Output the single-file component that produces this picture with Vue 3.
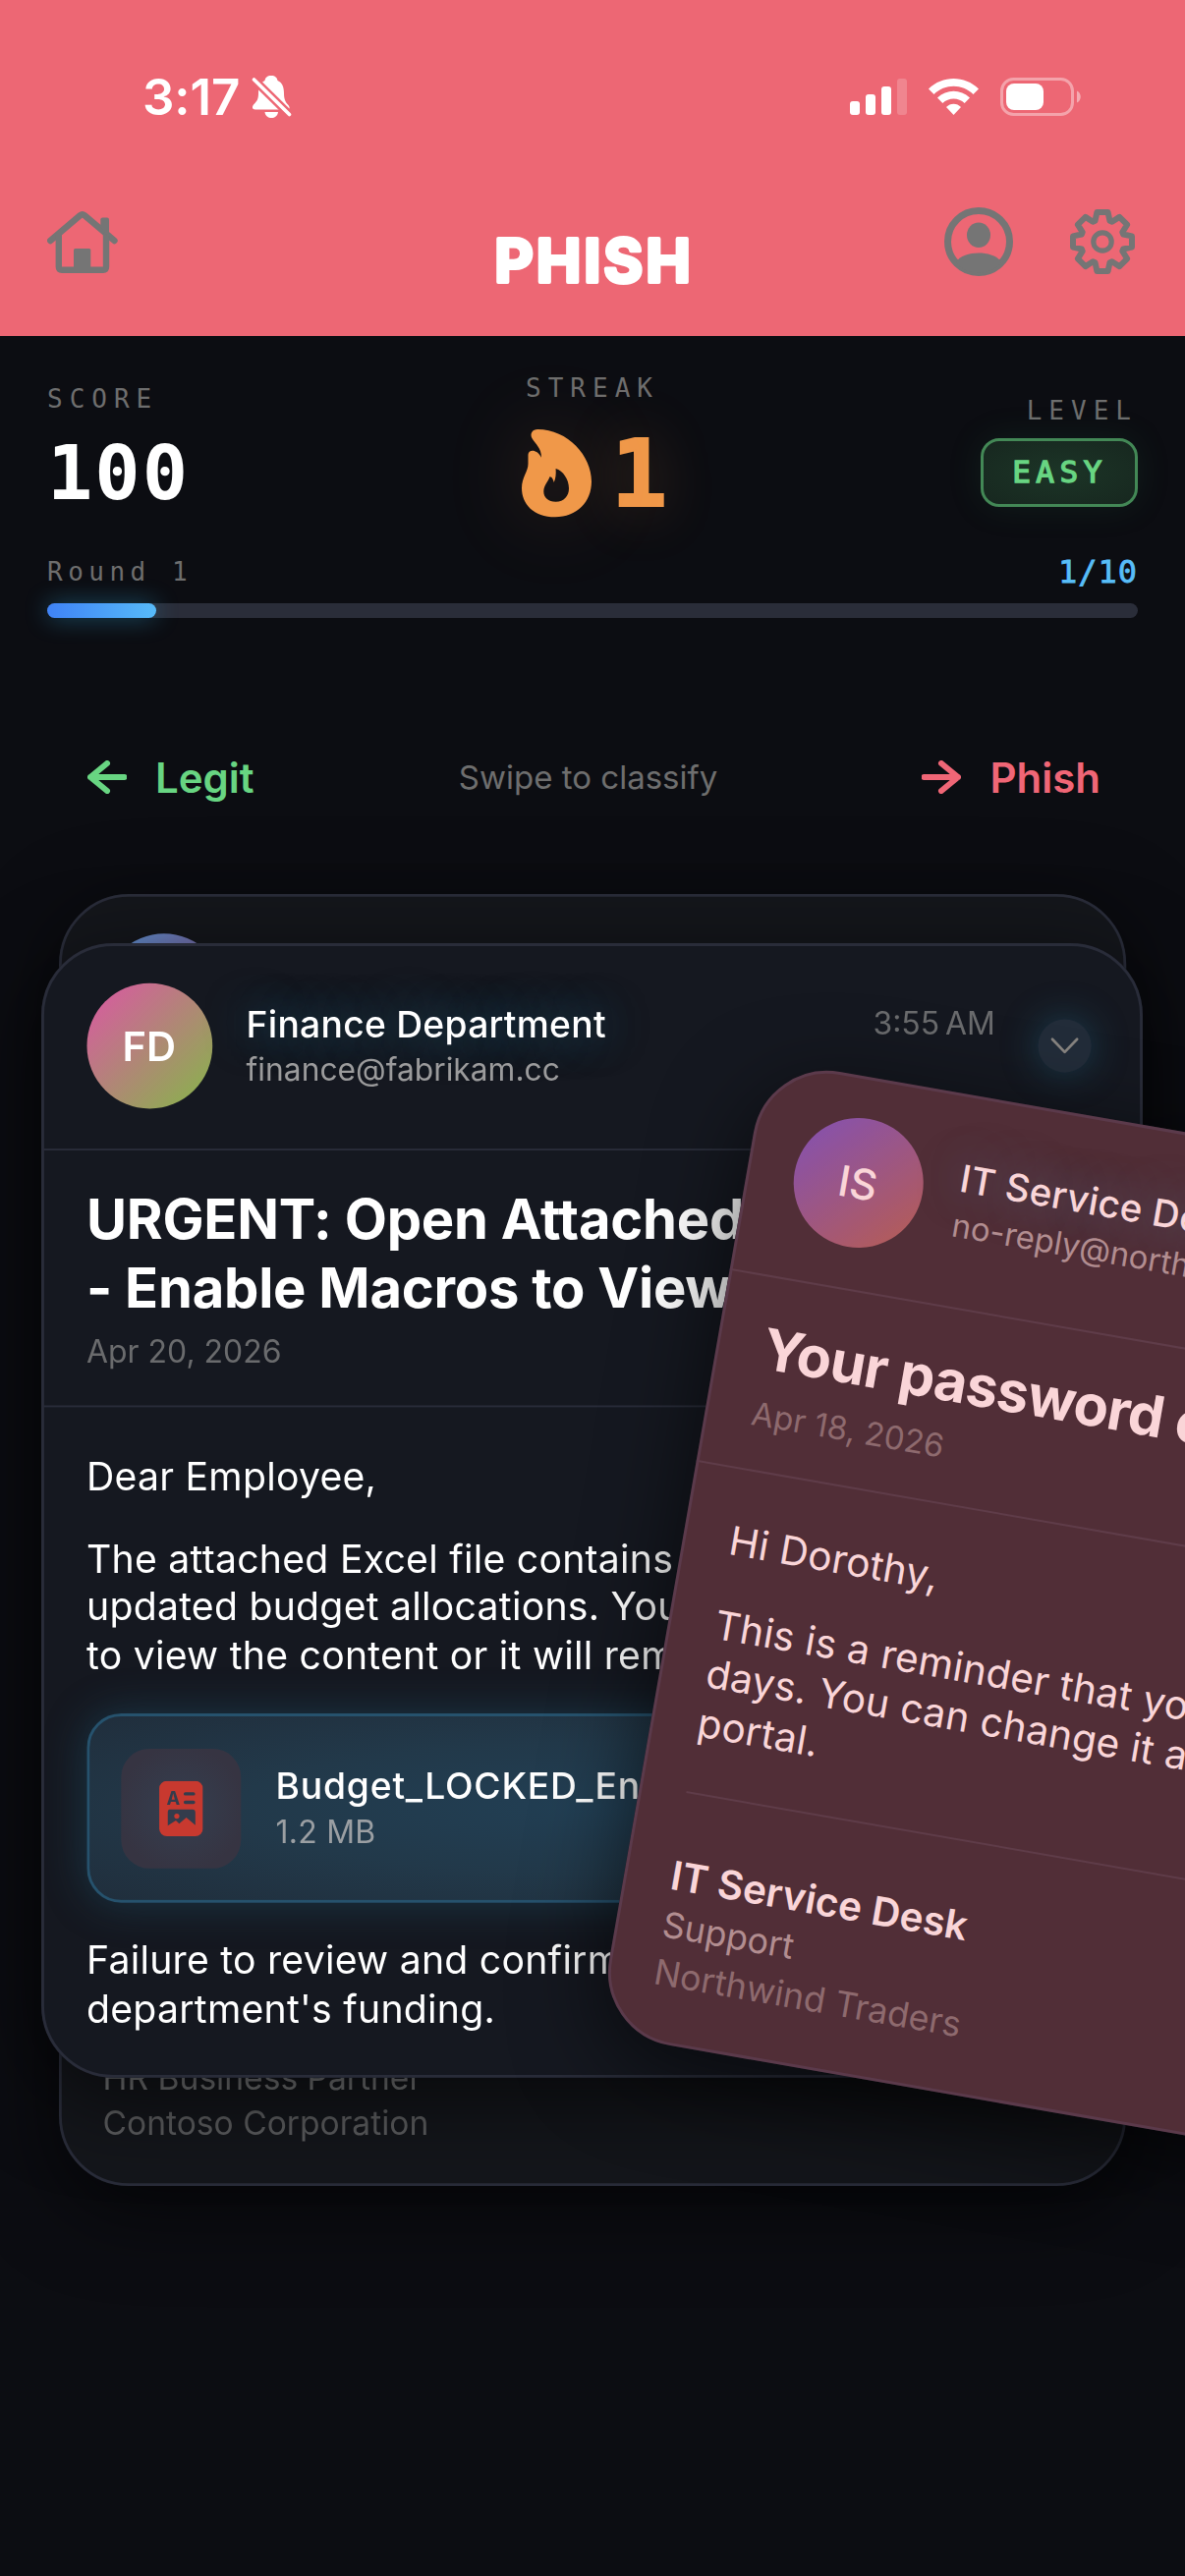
<script setup>
import { computed, ref } from 'vue';

const round = ref(1);
const totalRounds = 10;
const progress = computed(() => `${(round.value / totalRounds) * 100}%`);

const gearPath = computed(() =>
{
    const points = [];
    for (let i = 0; i < 8; i++)
    {
        const base = i * 45;
        [[-19.5, 22.5], [-10.5, 30.5], [10.5, 30.5], [19.5, 22.5]].forEach(([deg, r]) =>
        {
            const a = ((base + deg) * Math.PI) / 180;
            points.push(`${(Math.sin(a) * r).toFixed(2)} ${(-Math.cos(a) * r).toFixed(2)}`);
        });
    }
    return `M${points.join('L')}Z`;
});

// de atrás hacia delante
const cards = [
    {
        id: 'back',
        initials: '',
        subject: [],
        paragraphs: [],
        signature: { name: '', role: 'HR Business Partner', company: 'Contoso Corporation' }
    },
    {
        id: 'front',
        initials: 'FD',
        name: 'Finance Department',
        email: 'finance@fabrikam.cc',
        time: '3:55\u2009AM',
        subject: ['URGENT: Open Attached', '- Enable Macros to View'],
        date: 'Apr 20, 2026',
        paragraphs: [
            ['Dear Employee,'],
            ['The attached Excel file contains', 'updated budget allocations. You', 'to view the content or it will remain']
        ],
        file: { name: 'Budget_LOCKED_Enable.xlsm', size: '1.2 MB' },
        closing: ['Failure to review and confirm', "department's funding."]
    },
    {
        id: 'swiped',
        initials: 'IS',
        name: 'IT Service Desk',
        email: 'no-reply@northwindtraders.com',
        subject: ['Your password expires soon'],
        date: 'Apr 18, 2026',
        paragraphs: [
            ['Hi Dorothy,'],
            ['This is a reminder that your password', 'days. You can change it anytime', 'portal.']
        ],
        signature: { name: 'IT Service Desk', role: 'Support', company: 'Northwind Traders' }
    }
];
</script>

<template>
    <main class="screen">
        <header class="top">
            <div class="status">
                <div class="status-left">
                    <span class="clock">3:17</span>
                    <svg class="bell" viewBox="256 76 42 45">
                        <path d="M276 77c4 0 6 2 6.500 5c5 2 6.500 7 6.500 13c0 6 1.500 9 4 11.500c2 2 2.500 5-.5 5H260c-4 0-3.500-3.500-1.500-5.500c3-3 4.500-5 4.500-11c0-6 2-11 6.500-13c.5-3 2.500-5 6.500-5z" fill="#fff" />
                        <path d="M269.500 114h13.500c-.5 4-3.500 6-6.750 6s-6.250-2-6.750-6z" fill="#fff" />
                        <path d="M258.500 81L294.500 116.500" stroke="#ed6774" stroke-width="8.500" />
                        <path d="M258.500 81L294.500 116.500" stroke="#fff" stroke-width="3.600" stroke-linecap="round" />
                    </svg>
                </div>
                <div class="status-right">
                    <svg class="signal" viewBox="0 0 58 37" fill="#fff">
                        <rect x="0" y="23" width="10" height="14" rx="3" />
                        <rect x="16" y="16" width="10" height="21" rx="3" />
                        <rect x="32" y="8" width="10" height="29" rx="3" />
                        <rect x="48" y="0" width="10" height="37" rx="3" opacity=".2" />
                    </svg>
                    <svg class="wifi" viewBox="0 0 51 37" fill="#fff">
                        <path d="M0 10.500C14-3.500 37-3.500 51 10.500L45.500 16C34.500 5 16.500 5 5.500 16Z" />
                        <path d="M9 19.500C18.500 10.500 32.500 10.500 42 19.500L36.700 25C30.500 19 20.500 19 14.300 25Z" />
                        <path d="M18 29C22 24.500 29 24.500 33 29L25.500 37Z" />
                    </svg>
                    <svg class="battery" viewBox="0 0 83 39">
                        <rect x="1.500" y="1.500" width="72" height="36" rx="12" fill="none" stroke="#fff" stroke-opacity=".4" stroke-width="3" />
                        <rect x="6" y="6" width="38" height="27" rx="8" fill="#fff" />
                        <path d="M78 13.500c5 2 5 10 0 12z" fill="#fff" fill-opacity=".45" />
                    </svg>
                </div>
            </div>
            <nav class="nav">
                <svg class="home" viewBox="48 210 73 73" fill="none" stroke="#757575" stroke-width="6.400" stroke-linecap="round" stroke-linejoin="round">
                    <path d="M51.200 245L81.500 219.300Q83.800 217.500 86.100 219.300L116.500 245" />
                    <path d="M59.800 240V271.500Q59.800 274.700 63 274.700H105Q108 274.700 108 271.500V240" />
                    <path d="M102.300 231V223.500Q102.300 221.500 104.300 221.500H109Q111 221.500 111 223.500V242Z" fill="#757575" stroke="none" />
                    <path d="M75 275V254.500Q75 253 76.500 253H90.800Q92.300 253 92.300 254.500V275Z" fill="#757575" stroke="none" />
                </svg>
                <svg class="logo" viewBox="0 0 240 84">
                    <text x="122.500" y="62.500" text-anchor="middle">PHISH</text>
                </svg>
                <div class="nav-right">
                    <svg class="person" viewBox="0 0 70 70" fill="#757575">
                        <circle cx="35" cy="35" r="31.500" fill="none" stroke="#757575" stroke-width="7" />
                        <ellipse cx="35" cy="28.300" rx="12" ry="12.700" />
                        <path d="M12 55.500C20 43.500 50 43.500 58 55.500C50 70 20 70 12 55.500Z" />
                    </svg>
                    <svg class="gear" viewBox="-34 -34 68 68" fill="none" stroke="#757575" stroke-linejoin="round">
                        <path :d="gearPath" stroke-width="6" />
                        <circle r="9.200" stroke-width="5.200" />
                    </svg>
                </div>
            </nav>
        </header>

        <section class="stats">
            <div class="stat score">
                <span class="label">SCORE</span>
                <span class="score-value">100</span>
            </div>
            <div class="stat streak">
                <span class="label">STREAK</span>
                <div class="streak-value">
                    <svg class="flame" viewBox="0 0 74 90">
                        <path fill="#f09849" fill-rule="evenodd" d="M10.400 9C8 4 11 0 16.200 0C47 0 71 27 71 53C71 74 56 89.300 34 89.300C12 89.300 0 76 0 59.700C0 49 6.500 43 6.500 35V25.700C7 20.500 15 19.500 20 28.700C20 19 14 15 10.400 9ZM34.600 40C35 46 34.500 50 32.700 54C32 51 30.500 48 28.500 48.300C27 53 22.300 57 22.300 63.300C22.300 69.500 27 73.700 34.600 73.700C43 73.700 48 68 48 60C48 51 42 42 34.600 40Z" />
                    </svg>
                    <span class="streak-count">1</span>
                </div>
            </div>
            <div class="stat level">
                <span class="label">LEVEL</span>
                <span class="badge">EASY</span>
            </div>
        </section>

        <section class="round">
            <div class="round-row">
                <span class="label round-label">Round {{ round }}</span>
                <span class="round-count">{{ round }}/{{ totalRounds }}</span>
            </div>
            <div class="track">
                <div class="fill" :style="{ width: progress }"></div>
            </div>
        </section>

        <section class="hints">
            <div class="hint legit">
                <svg viewBox="0 0 40 34"><path d="M20 3L3 17L20 31M3 17H37.500" /></svg>
                <span>Legit</span>
            </div>
            <span class="hint-text">Swipe to classify</span>
            <div class="hint phish">
                <svg viewBox="0 0 40 34"><path d="M20 3L37 17L20 31M37 17H2.500" /></svg>
                <span>Phish</span>
            </div>
        </section>

        <section class="deck">
            <article v-for="card in cards" :key="card.id" class="card" :class="card.id">
                <div class="card-header">
                    <div class="avatar">{{ card.initials }}</div>
                    <div class="sender">
                        <span class="name">{{ card.name }}</span>
                        <span class="email">{{ card.email }}</span>
                    </div>
                    <span v-if="card.time" class="time">{{ card.time }}</span>
                    <span v-if="card.time" class="toggle">
                        <svg viewBox="0 0 30 18"><path d="M2 2L15 15.500L28 2" /></svg>
                    </span>
                </div>

                <div v-if="card.subject.length" class="card-subject">
                    <h2><span v-for="line in card.subject" :key="line">{{ line }}</span></h2>
                    <span class="date">{{ card.date }}</span>
                </div>

                <div class="card-body">
                    <p v-for="(lines, i) in card.paragraphs" :key="i">
                        <span v-for="line in lines" :key="line">{{ line }}</span>
                    </p>
                    <div v-if="card.file" class="file">
                        <div class="file-icon">
                            <svg viewBox="0 0 46 58">
                                <rect width="46" height="58" rx="8" fill="#c8392f" />
                                <text x="15" y="25" text-anchor="middle">A</text>
                                <path d="M27.500 13.500H36M27.500 22.500H36" stroke="#343c4c" stroke-width="3.600" stroke-linecap="round" />
                                <path d="M11 30H35Q38 30 38 33V46.500L28.500 38.500L21 45L17.500 41.500L9 47V33Q9 30 11 30Z" fill="#343c4c" />
                                <circle cx="18.500" cy="37" r="2.700" fill="#c8392f" />
                            </svg>
                        </div>
                        <div class="file-info">
                            <span class="file-name">{{ card.file.name }}</span>
                            <span class="file-size">{{ card.file.size }}</span>
                        </div>
                    </div>
                    <p v-if="card.closing">
                        <span v-for="line in card.closing" :key="line">{{ line }}</span>
                    </p>
                    <div v-if="card.signature" class="signature">
                        <span class="sig-name">{{ card.signature.name }}</span>
                        <span class="sig-role">{{ card.signature.role }}</span>
                        <span class="sig-company">{{ card.signature.company }}</span>
                    </div>
                </div>
            </article>
        </section>
    </main>
</template>

<style>
body {
    margin: 0;
    background: #0c0d12;
}
</style>

<style scoped>
* {
    box-sizing: border-box;
}

.screen {
    width: 1206px;
    height: 2622px;
    overflow: hidden;
    background: #0c0d12;
    color: #fff;
    font-family: Inter, "Liberation Sans", sans-serif;
}

svg {
    display: block;
    flex-shrink: 0;
}

/* Header */
.top {
    height: 342px;
    background: #ed6774;
}

.status {
    display: flex;
    justify-content: space-between;
    align-items: center;
    height: 196px;
    padding: 0 105px 0 145px;
}

.status-left,
.status-right {
    display: flex;
    align-items: center;
}

.status-left {
    gap: 12px;
}

.clock {
    font-size: 51px;
    font-weight: 600;
    letter-spacing: -0.1px;
}

.bell {
    width: 42px;
    height: 45px;
}

.signal {
    width: 58px;
    height: 37px;
    margin-right: 22px;
}

.wifi {
    width: 51px;
    height: 37px;
    margin-right: 22px;
}

.battery {
    width: 83px;
    height: 39px;
}

.nav {
    display: grid;
    grid-template-columns: 1fr auto 1fr;
    align-items: start;
    padding: 14px 50px 0 48px;
}

.home {
    width: 73px;
    height: 73px;
}

.logo {
    width: 240px;
    height: 84px;
    margin-top: 14px;
    overflow: visible;
}

.logo text {
    font-size: 61px;
    font-weight: 700;
    letter-spacing: 3px;
    fill: #fff;
    stroke: #fff;
    stroke-width: 4px;
    stroke-linejoin: round;
}

.nav-right {
    display: flex;
    justify-content: flex-end;
    align-items: center;
    gap: 57px;
    padding-top: 1px;
}

.person {
    width: 70px;
    height: 70px;
}

.gear {
    width: 68px;
    height: 68px;
}

/* Stats */
.stats {
    display: grid;
    grid-template-columns: 1fr auto 1fr;
    align-items: center;
    height: 158px;
    margin: 37px 48px 0;
    font-family: "DejaVu Sans Mono", monospace;
}

.stat {
    display: flex;
    flex-direction: column;
    align-items: flex-start;
}

.label {
    font-family: "DejaVu Sans Mono", monospace;
    font-size: 26px;
    line-height: 32px;
    letter-spacing: 7px;
    color: #6e6e6e;
}

.score-value {
    margin-top: 15px;
    font-size: 77px;
    font-weight: 700;
    line-height: 90px;
    letter-spacing: 2px;
}

.streak {
    align-items: center;
}

.streak-value {
    display: flex;
    align-items: center;
    gap: 17px;
    height: 110px;
    margin-top: 16px;
    margin-left: 4px;
    font-size: 95px;
    font-weight: 700;
    line-height: 110px;
    color: #f09849;
    text-shadow: 0 0 60px rgba(240, 152, 73, 0.3);
}

.streak-count {
    -webkit-text-stroke: 2px currentColor;
}

.flame {
    width: 74px;
    height: 90px;
    filter: drop-shadow(0 0 40px rgba(240, 152, 73, 0.16));
}

.level {
    align-items: flex-end;
    padding-top: 2px;
}

.badge {
    width: 160px;
    height: 70px;
    margin-top: 12px;
    border: 3px solid #438856;
    border-radius: 19px;
    background: radial-gradient(#1c3527, #17271f);
    box-shadow: 0 0 36px rgba(50, 150, 90, 0.12);
    font-size: 31px;
    line-height: 63px;
    letter-spacing: 5.500px;
    text-indent: 1px;
    text-align: center;
    color: #68d582;
    -webkit-text-stroke: 1.4px currentColor;
}

.round {
    margin: 25px 48px 0;
}

.round-row {
    display: flex;
    justify-content: space-between;
    height: 40px;
}

.round-label {
    line-height: 40px;
    letter-spacing: 5.5px;
}

.round-count {
    font-family: "DejaVu Sans Mono", monospace;
    font-size: 32px;
    line-height: 40px;
    letter-spacing: 1px;
    color: #58bdf8;
    -webkit-text-stroke: 0.8px currentColor;
}

.track {
    height: 15px;
    margin-top: 12px;
    border-radius: 8px;
    background: #2a2d39;
}

.fill {
    height: 100%;
    border-radius: 8px;
    background: linear-gradient(90deg, #3f83f6, #57bbf9);
    box-shadow: 0 0 24px rgba(56, 189, 248, 0.4);
}

/* Swipe hints */
.hints {
    display: flex;
    justify-content: space-between;
    align-items: center;
    height: 50px;
    margin: 137px 86px 0 89px;
}

.hint {
    display: flex;
    align-items: center;
    gap: 29px;
    font-size: 42px;
    font-weight: 600;
}

.hint svg {
    width: 40px;
    height: 34px;
    fill: none;
    stroke: currentColor;
    stroke-width: 6;
    stroke-linecap: round;
    stroke-linejoin: round;
}

.legit {
    color: #68d582;
}

.phish {
    color: #f06676;
}

.hint-text {
    font-size: 33px;
    color: #6e6e6e;
}

/* Cards */
.deck {
    position: relative;
    height: 1712px;
    margin-top: 94px;
}

.card {
    position: absolute;
    width: 1158px;
    border-radius: 76px;
    background: #151820;
    box-shadow: 0 24px 90px rgba(0, 0, 0, 0.6);
    transform-origin: 0 0;
    white-space: nowrap;
}

/* borde y tinte por encima del contenido */
.card::after {
    content: "";
    position: absolute;
    inset: 0;
    border: 3px solid #292c39;
    border-radius: 76px;
}

.back {
    top: 0;
    left: 59.500px;
    height: 1402px;
    display: flex;
    flex-direction: column;
    justify-content: space-between;
    background: #14161b;
    transform: scale(0.938);
}

.front {
    top: 50px;
    left: 42px;
    height: 1193px;
    transform: scale(0.968);
}

.swiped {
    top: 168px;
    left: 780px;
    height: 1006px;
    transform: rotate(9.9deg);
}

.swiped::after {
    border-color: #5b3a4b;
    background: rgba(238, 103, 116, 0.28);
}

.card-header {
    display: flex;
    align-items: center;
    height: 218px;
    padding: 1px 54px 1px 47.500px;
    border-bottom: 2px solid #292c39;
}

.back .card-header {
    border: 0;
}

.avatar {
    flex-shrink: 0;
    display: flex;
    align-items: center;
    justify-content: center;
    width: 132px;
    height: 132px;
    border-radius: 50%;
    font-size: 43px;
    font-weight: 600;
    background: linear-gradient(135deg, #d2619a 12%, #8fab53 88%);
}

.back .avatar {
    background: linear-gradient(135deg, #5f8fcf 10%, #8a4a83 80%);
}

.swiped .avatar {
    font-weight: 500;
    background: linear-gradient(135deg, #5d48c8 5%, #a0584a 95%);
}

.sender {
    display: flex;
    flex-direction: column;
    flex: 1;
    margin-left: 36px;
}

.name {
    align-self: flex-start;
    font-size: 38.500px;
    font-weight: 500;
    line-height: 49px;
    letter-spacing: 0.25px;
    text-shadow: 0 0 44px rgba(45, 150, 190, 0.6);
}

.email {
    font-size: 32.800px;
    line-height: 46px;
    color: #9b9b9c;
}

.time {
    margin: -48px 45px 0 0;
    font-size: 33px;
    color: #6a6b6d;
}

.toggle {
    display: flex;
    align-items: center;
    justify-content: center;
    width: 56px;
    height: 56px;
    border-radius: 50%;
    background: #222c39;
    box-shadow: 0 0 40px rgba(35, 110, 145, 0.45);
}

.toggle svg {
    width: 30px;
    height: 18px;
    fill: none;
    stroke: #86837f;
    stroke-width: 2.8;
    stroke-linecap: round;
    stroke-linejoin: round;
}

.card-subject {
    padding: 36px 47.500px 37px;
    border-bottom: 2px solid #292c39;
}

.card-subject h2 {
    margin: 0 0 11px;
    font-size: 58px;
    font-weight: 700;
    line-height: 72px;
    letter-spacing: -0.250px;
}

.swiped .card-subject h2 {
    letter-spacing: -0.8px;
}

h2 span,
p span {
    display: block;
}

.date {
    display: block;
    font-size: 33px;
    line-height: 40px;
    color: #6a6b6d;
}

.card-body {
    padding: 48px 47.500px 0;
    font-size: 40.500px;
    line-height: 50.600px;
    letter-spacing: 0.25px;
}

.card-body p {
    margin: 0 0 36px;
}

.file {
    display: flex;
    align-items: center;
    gap: 37px;
    height: 199px;
    margin-bottom: 36px;
    padding: 0 33px;
    border: 3px solid #26526d;
    border-radius: 36px;
    background: radial-gradient(ellipse, #223f54 0%, #22394a 50%, #202e3c 100%);
    box-shadow: 0 0 44px rgba(34, 100, 130, 0.4);
}

.file-icon {
    display: flex;
    align-items: center;
    justify-content: center;
    width: 126px;
    height: 126px;
    border-radius: 30px;
    background: radial-gradient(#343f50, #363442 75%);
}

.file-icon svg {
    width: 46px;
    height: 58px;
}

.file-icon text {
    font-size: 19px;
    font-weight: 700;
    fill: #343c4c;
}

.file-info {
    display: flex;
    flex-direction: column;
}

.file-name {
    font-size: 38.500px;
    font-weight: 500;
    line-height: 48px;
    letter-spacing: 0.8px;
}

.file-size {
    font-size: 33px;
    line-height: 48px;
    color: #9b9fa3;
}

.signature {
    display: flex;
    flex-direction: column;
    margin-top: 46px;
    padding: 59px 0 45px;
    border-top: 2px solid #292c39;
    letter-spacing: 0;
}

.back .signature {
    margin: 0;
    border: 0;
}

.sig-name {
    font-weight: 600;
    font-size: 40.500px;
    line-height: 52px;
}

.sig-role {
    font-size: 35.800px;
    line-height: 49px;
    color: #9b9b9c;
}

.sig-company {
    font-size: 35.800px;
    line-height: 48px;
    color: #6a6b6d;
}

.back .sig-role {
    color: #77787a;
}

.back .sig-company {
    color: #5c5d5f;
}
</style>
